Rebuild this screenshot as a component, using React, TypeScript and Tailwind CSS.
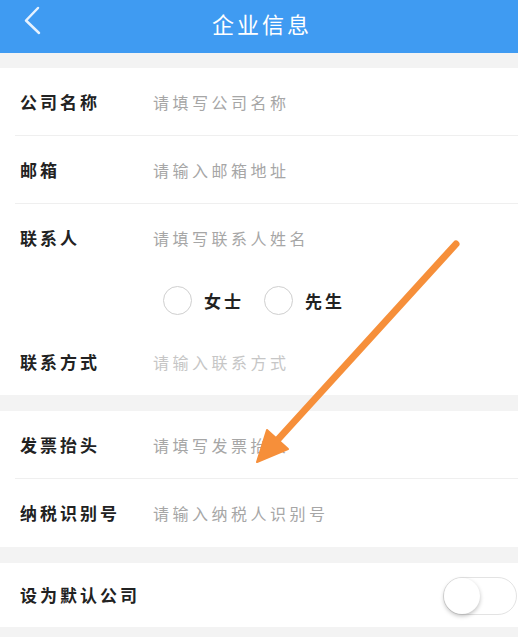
import React from 'react';

const cjk = { fontFamily: '"Noto Sans CJK SC", "Noto Sans", sans-serif' };

type RowProps = { label: string; placeholder: string; divider?: boolean; faint?: boolean; h?: string };

const Row = ({ label, placeholder, divider, faint, h = 'h-[68px]' }: RowProps) => (
  <div className={`flex items-center ${h} ml-[15px] pl-[5px] ${divider ? 'border-b border-[#efefef]' : ''}`}>
    <span className="w-[133px] shrink-0 text-[17px] font-bold tracking-[3px] text-[#222]">{label}</span>
    <span className={`text-[16px] tracking-[3.5px] ${faint ? 'text-[#c6c6c6]' : 'text-[#a6a6a6]'}`}>{placeholder}</span>
  </div>
);

const Radio = ({ label }: { label: string }) => (
  <div className="flex items-center gap-3">
    <span className="w-[29px] h-[29px] rounded-full border-[1.5px] border-[#cfcfcf] bg-white" />
    <span className="text-[17px] font-bold tracking-[3px] text-[#222]">{label}</span>
  </div>
);

const App = () => {
  return (
    <div className="relative min-h-[637px] bg-[#f3f3f3] overflow-hidden" style={cjk}>
      {/* Header */}
      <header className="relative h-[53px] bg-[#3f9bf2] flex items-center justify-center">
        <svg className="absolute left-0 top-0" width="60" height="53" viewBox="0 0 60 53">
          <polyline points="38,8 26,20.5 39,33" fill="none" stroke="#e6f2ff" strokeWidth="2.5" strokeLinecap="round" strokeLinejoin="round" />
        </svg>
        <h1 className="text-[22px] tracking-[3px] text-white -mt-[7px] pl-[6px]">企业信息</h1>
      </header>

      <div className="h-[15px]" />

      {/* Contact section */}
      <section className="bg-white">
        <Row label="公司名称" placeholder="请填写公司名称" divider />
        <Row label="邮箱" placeholder="请输入邮箱地址" divider />
        <Row label="联系人" placeholder="请填写联系人姓名" />
        <div className="h-[57px] flex items-center gap-5 pl-[163px]">
          <Radio label="女士" />
          <Radio label="先生" />
        </div>
        <Row label="联系方式" placeholder="请输入联系方式" faint h="h-[66px]" />
      </section>

      <div className="h-[16px]" />

      {/* Invoice section */}
      <section className="bg-white">
        <Row label="发票抬头" placeholder="请填写发票抬头" divider />
        <Row label="纳税识别号" placeholder="请输入纳税人识别号" />
      </section>

      <div className="h-[16px]" />

      {/* Default switch */}
      <section className="bg-white h-[64px] flex items-center justify-between pl-[20px]">
        <span className="text-[17px] font-bold tracking-[3px] text-[#222]">设为默认公司</span>
        <div className="w-[74px] h-[38px] rounded-full border border-[#e3e3e3] bg-white flex items-center mr-[1px] -mb-[1px]">
          <span className="w-[36px] h-[36px] rounded-full bg-white shadow-[0_2px_4px_rgba(0,0,0,0.25)]" />
        </div>
      </section>

      {/* Annotation arrow */}
      <svg className="absolute left-0 top-0 pointer-events-none" width="518" height="637" viewBox="0 0 518 637">
        <line x1="456" y1="244" x2="272" y2="446" stroke="#f68f3a" strokeWidth="7" strokeLinecap="round" />
        <polygon points="257,462 267,430 288,449" fill="#f68f3a" stroke="#f68f3a" strokeWidth="2" strokeLinejoin="round" />
      </svg>
    </div>
  );
};

export default App;
